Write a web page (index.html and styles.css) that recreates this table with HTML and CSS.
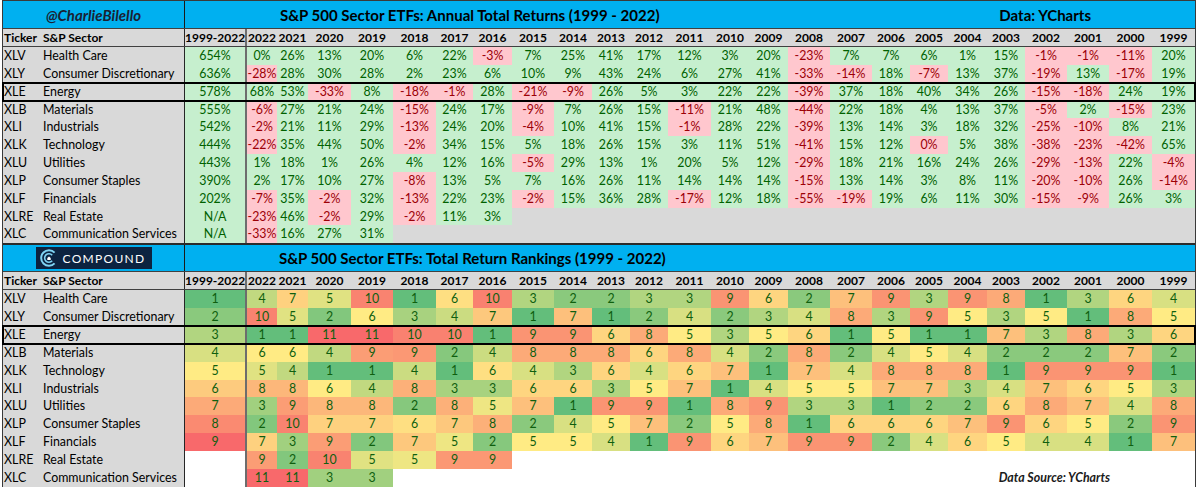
FILE: index.html
```html
<!DOCTYPE html>
<html lang="en">
<head>
<meta charset="utf-8">
<title>S&amp;P 500 Sector ETFs</title>
<link rel="stylesheet" href="styles.css">
</head>
<body>
<div class="sheet">
  <section class="block">
    <div class="title-row">
      <div class="brand"><span class="handle">@CharlieBilello</span></div>
      <div class="title">S&amp;P 500 Sector ETFs: Annual Total Returns (1999 - 2022)</div>
      <div class="source">Data: YCharts</div>
    </div>
    <div class="row head" data-head></div>
    <div class="rows returns" id="returns"></div>
  </section>
  <section class="block block-ranks">
    <div class="title-row">
      <div class="brand">
        <div class="logo">
          <svg class="logo-mark" width="18" height="18" viewBox="0 0 18 18">
            <path d="M14.6 3.6 A7.8 7.8 0 1 0 14.6 14.4" fill="none" stroke="#7fd3f2" stroke-width="2"/>
            <path d="M12.2 6.2 A4.3 4.3 0 1 0 12.2 11.8" fill="none" stroke="#7fd3f2" stroke-width="1.6"/>
            <path d="M7.3 11 V9 L9 7.5 L10.7 9 V11 Z" fill="#ffffff"/>
          </svg>
          <span class="logo-text">COMPOUND</span>
        </div>
      </div>
      <div class="title title-ranks">S&amp;P 500 Sector ETFs: Total Return Rankings (1999 - 2022)</div>
    </div>
    <div class="row head" data-head></div>
    <div class="rows ranks" id="ranks"></div>
  </section>
</div>
<script src="script.js"></script>
</body>
</html>
```
FILE: styles.css
```css
* { box-sizing: border-box; }
body {
  margin: 0;
  background: #ffffff;
  font-family: Lato, "Open Sans", "Liberation Sans", sans-serif;
  font-size: 12.4px;
  color: #000;
}
.sheet {
  margin-left: 2px;
  width: 1194px;
  border: 1px solid #3a3a3a;
}
.title-row {
  display: flex;
  align-items: center;
  height: 27px;
  background: #00b0f0;
  font-size: 15px;
  font-weight: 700;
}
.block-ranks .title-row {
  border-top: 2px solid #2b2b2b;
  height: 28px;
}
.brand {
  width: 182px;
  height: 100%;
  border-right: 1px solid #1a1a1a;
  display: flex;
  align-items: center;
  justify-content: center;
}
.handle {
  font-style: italic;
  color: #1b1f33;
}
.title { margin-left: 95px; }
.title-ranks { margin-left: 94px; }
.source { margin-left: auto; margin-right: 104px; }

.logo {
  width: 116px;
  height: 22px;
  background: #0c2340;
  display: flex;
  align-items: center;
  gap: 5px;
  padding-left: 4px;
}
.logo-mark { display: block; }
.logo-text {
  color: #ffffff;
  font-size: 12px;
  font-weight: 400;
  letter-spacing: 1.3px;
}

.row {
  display: grid;
  grid-template-columns: 37px 144px 61px 32px 31px 43px 42px 43px 37px 39px 42px 38px 38px 38px 43px 38px 39px 42px 42px 38px 38px 39px 38px 42px 42px 43px 43px;
  height: 17.85px;
  line-height: 17.85px;
}
.head {
  height: 19px;
  line-height: 17px;
  background: #d9d9d9;
  border-top: 1px solid #404040;
  border-bottom: 1px solid #404040;
  font-weight: 700;
  font-size: 12px;
}
.returns .row { background: #d9d9d9; }
.ranks .row { background: #ffffff; }

.c {
  text-align: center;
  white-space: nowrap;
  overflow: hidden;
}
.tk {
  text-align: left;
  padding-left: 1px;
  background: #d9d9d9;
}
.sec {
  text-align: left;
  padding-left: 3px;
  background: #d9d9d9;
}
.tot { border-left: 1px solid #262626; }
.first { border-left: 2px solid #6d6d6d; }
.pos { background: #c6efce; color: #006100; }
.neg { background: #ffc7ce; color: #9c0006; }
.rank { color: #0f5f0f; }

.energy {
  position: relative;
  z-index: 1;
  outline: 2px solid #000;
  outline-offset: -1px;
}
.note {
  grid-column: 8 / -1;
  text-align: right;
  padding-right: 85px;
  font-weight: 700;
  font-style: italic;
  color: #1a1a1a;
}
```
FILE: script.js
```js
const YEARS = [];
for (let y = 2022; y >= 1999; y--) YEARS.push(y);

const RETURNS = [
  ["XLV", "Health Care", "654%", "0 26 13 20 6 22 -3 7 25 41 17 12 3 20 -23 7 7 6 1 15 -1 -1 -11 20"],
  ["XLY", "Consumer Discretionary", "636%", "-28 28 30 28 2 23 6 10 9 43 24 6 27 41 -33 -14 18 -7 13 37 -19 13 -17 19"],
  ["XLE", "Energy", "578%", "68 53 -33 8 -18 -1 28 -21 -9 26 5 3 22 22 -39 37 18 40 34 26 -15 -18 24 19"],
  ["XLB", "Materials", "555%", "-6 27 21 24 -15 24 17 -9 7 26 15 -11 21 48 -44 22 18 4 13 37 -5 2 -15 23"],
  ["XLI", "Industrials", "542%", "-2 21 11 29 -13 24 20 -4 10 41 15 -1 28 22 -39 13 14 3 18 32 -25 -10 8 21"],
  ["XLK", "Technology", "444%", "-22 35 44 50 -2 34 15 5 18 26 15 3 11 51 -41 15 12 -0 5 38 -38 -23 -42 65"],
  ["XLU", "Utilities", "443%", "1 18 1 26 4 12 16 -5 29 13 1 20 5 12 -29 18 21 16 24 26 -29 -13 22 -4"],
  ["XLP", "Consumer Staples", "390%", "2 17 10 27 -8 13 5 7 16 26 11 14 14 14 -15 13 14 3 8 11 -20 -10 26 -14"],
  ["XLF", "Financials", "202%", "-7 35 -2 32 -13 22 23 -2 15 36 28 -17 12 18 -55 -19 19 6 11 30 -15 -9 26 3"],
  ["XLRE", "Real Estate", "N/A", "-23 46 -2 29 -2 11 3"],
  ["XLC", "Communication Services", "N/A", "-33 16 27 31"]
];

const RANKS = [
  ["XLV", "Health Care", 1, "4 7 5 10 1 6 10 3 2 2 3 3 9 6 2 7 9 3 9 8 1 3 6 4"],
  ["XLY", "Consumer Discretionary", 2, "10 5 2 6 3 4 7 1 7 1 2 4 2 3 4 8 3 9 5 3 5 1 8 5"],
  ["XLE", "Energy", 3, "1 1 11 11 10 10 1 9 9 6 8 5 3 5 6 1 5 1 1 7 3 8 3 6"],
  ["XLB", "Materials", 4, "6 6 4 9 9 2 4 8 8 8 6 8 4 2 8 2 4 5 4 2 2 2 7 2"],
  ["XLK", "Technology", 5, "5 4 1 1 4 1 6 4 3 6 4 6 7 1 7 4 8 8 8 1 9 9 9 1"],
  ["XLI", "Industrials", 6, "8 8 6 4 8 3 3 6 6 3 5 7 1 4 5 5 7 7 3 4 7 6 5 3"],
  ["XLU", "Utilities", 7, "3 9 8 8 2 8 5 7 1 9 9 1 8 9 3 3 1 2 2 6 8 7 4 8"],
  ["XLP", "Consumer Staples", 8, "2 10 7 7 6 7 8 2 4 5 7 2 5 8 1 6 6 6 7 9 6 5 2 9"],
  ["XLF", "Financials", 9, "7 3 9 2 7 5 2 5 5 4 1 9 6 7 9 9 2 4 6 5 4 4 1 7"],
  ["XLRE", "Real Estate", null, "9 2 10 5 5 9 9"],
  ["XLC", "Communication Services", null, "11 11 3 3"]
];

function cell(cls, text) {
  const d = document.createElement("div");
  d.className = "c " + cls;
  if (text != null) d.textContent = text;
  return d;
}

document.querySelectorAll("[data-head]").forEach(function (h) {
  h.appendChild(cell("tk", "Ticker"));
  h.appendChild(cell("sec", "S&P Sector"));
  h.appendChild(cell("tot", "1999-2022"));
  YEARS.forEach(function (y, i) {
    h.appendChild(cell("yr" + (i === 0 ? " first" : ""), String(y)));
  });
});

const retBox = document.getElementById("returns");
RETURNS.forEach(function (r) {
  const row = document.createElement("div");
  row.className = "row" + (r[0] === "XLE" ? " energy" : "");
  row.appendChild(cell("tk", r[0]));
  row.appendChild(cell("sec", r[1]));
  row.appendChild(cell("tot pos", r[2]));
  const vals = r[3].split(" ");
  for (let i = 0; i < YEARS.length; i++) {
    const f = i === 0 ? " first" : "";
    if (i < vals.length) {
      const v = vals[i];
      const neg = v.charAt(0) === "-";
      const text = v === "-0" ? "0%" : v + "%";
      row.appendChild(cell("yr " + (neg ? "neg" : "pos") + f, text));
    } else {
      row.appendChild(cell("yr" + f, ""));
    }
  }
  retBox.appendChild(row);
});

const G = [99, 190, 123], Y = [255, 235, 132], R = [248, 105, 107];
function mix(a, b, t) {
  return "rgb(" + a.map(function (x, k) { return Math.round(x + (b[k] - x) * t); }).join(",") + ")";
}
function scale(v, mid, max) {
  if (v <= mid) return mix(G, Y, (v - 1) / (mid - 1));
  return mix(Y, R, (v - mid) / (max - mid));
}

const rankVals = RANKS.map(function (r) { return r[3].split(" ").map(Number); });
const mids = YEARS.map(function (_, i) {
  let n = 0;
  rankVals.forEach(function (v) { if (i < v.length) n++; });
  return (1 + n) / 2;
});

const rankBox = document.getElementById("ranks");
RANKS.forEach(function (r, ri) {
  const row = document.createElement("div");
  row.className = "row" + (r[0] === "XLE" ? " energy" : "");
  row.appendChild(cell("tk", r[0]));
  row.appendChild(cell("sec", r[1]));
  const t = cell("tot rank", r[2] == null ? "" : String(r[2]));
  if (r[2] != null) t.style.background = scale(r[2], 5, 9);
  row.appendChild(t);
  const vals = rankVals[ri];
  const isLast = ri === RANKS.length - 1;
  for (let i = 0; i < YEARS.length; i++) {
    const f = i === 0 ? " first" : "";
    if (i < vals.length) {
      const c = cell("yr rank" + f, String(vals[i]));
      c.style.background = scale(vals[i], mids[i], 11);
      row.appendChild(c);
    } else if (isLast) {
      const n = document.createElement("div");
      n.className = "note";
      n.textContent = "Data Source: YCharts";
      row.appendChild(n);
      break;
    } else {
      row.appendChild(cell("yr" + f, ""));
    }
  }
  rankBox.appendChild(row);
});
```
